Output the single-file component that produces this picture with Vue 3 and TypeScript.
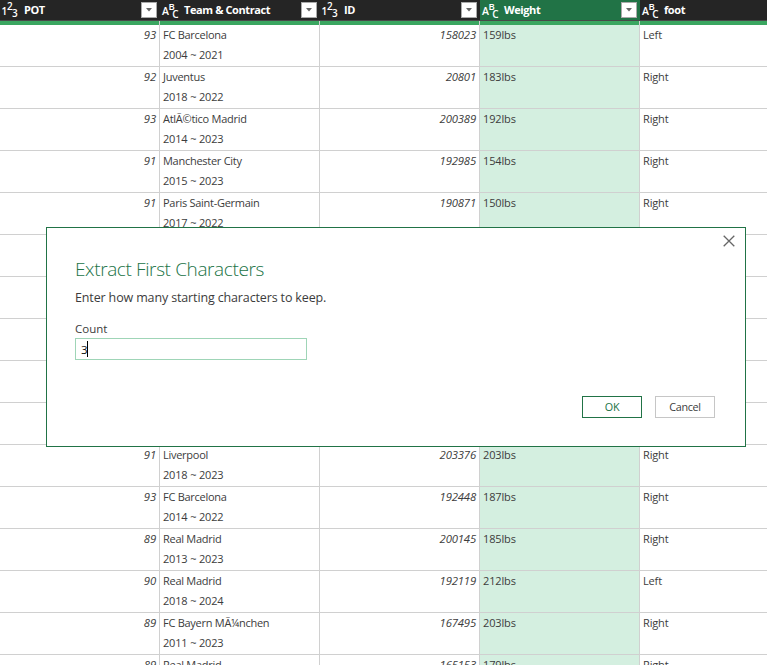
<script setup lang="ts">
import { ref } from 'vue'

interface Column {
  title: string
  kind: 'number' | 'text'
  filter: boolean
  selected?: boolean
}

interface Player {
  pot: string
  team: string
  contract: string
  id: string
  weight: string
  foot: string
}

const columns: Column[] = [
  { title: 'POT', kind: 'number', filter: true },
  { title: 'Team & Contract', kind: 'text', filter: true },
  { title: 'ID', kind: 'number', filter: true },
  { title: 'Weight', kind: 'text', filter: true, selected: true },
  { title: 'foot', kind: 'text', filter: false },
]

const player = (
  pot = '', team = '', contract = '', id = '', weight = '', foot = '',
): Player => ({ pot, team, contract, id, weight, foot })

const rows: Player[] = [
  player('93', 'FC Barcelona', '2004 ~ 2021', '158023', '159lbs', 'Left'),
  player('92', 'Juventus', '2018 ~ 2022', '20801', '183lbs', 'Right'),
  player('93', 'AtlÃ©tico Madrid', '2014 ~ 2023', '200389', '192lbs', 'Right'),
  player('91', 'Manchester City', '2015 ~ 2023', '192985', '154lbs', 'Right'),
  player('91', 'Paris Saint-Germain', '2017 ~ 2022', '190871', '150lbs', 'Right'),
  player(),
  player(),
  player(),
  player(),
  player(),
  player('91', 'Liverpool', '2018 ~ 2023', '203376', '203lbs', 'Right'),
  player('93', 'FC Barcelona', '2014 ~ 2022', '192448', '187lbs', 'Right'),
  player('89', 'Real Madrid', '2013 ~ 2023', '200145', '185lbs', 'Right'),
  player('90', 'Real Madrid', '2018 ~ 2024', '192119', '212lbs', 'Left'),
  player('89', 'FC Bayern MÃ¼nchen', '2011 ~ 2023', '167495', '203lbs', 'Right'),
  player('89', 'Real Madrid', '', '165153', '179lbs', 'Right'),
]

const count = ref('3')
</script>

<template>
  <main class="editor">
    <div class="grid header">
      <div v-for="col in columns" :key="col.title" class="head" :class="{ selected: col.selected }">
        <svg class="type" width="18" height="20" viewBox="0 0 18 20" aria-hidden="true">
          <template v-if="col.kind === 'number'">
            <text x="0.6" y="14.7" font-size="10">1</text>
            <text x="5.9" y="10.3" font-size="10">2</text>
            <text x="11" y="17" font-size="10">3</text>
          </template>
          <template v-else>
            <text x="1" y="15" font-size="10.5">A</text>
            <text x="7.5" y="9.7" font-size="9.5">B</text>
            <text x="11.2" y="17.7" font-size="10">C</text>
          </template>
        </svg>
        <span class="title">{{ col.title }}</span>
        <button v-if="col.filter" class="filter" type="button">
          <svg width="6" height="4" viewBox="0 0 6 4"><path d="M0 0H6L3 3.5Z" fill="#666" /></svg>
        </button>
      </div>
    </div>
    <div class="grid quality">
      <i v-for="col in columns" :key="col.title"></i>
    </div>
    <div v-for="(row, i) in rows" :key="i" class="grid row">
      <div class="cell num">{{ row.pot }}</div>
      <div class="cell">
        <div class="team">{{ row.team }}</div>
        <div class="years">{{ row.contract }}</div>
      </div>
      <div class="cell num">{{ row.id }}</div>
      <div class="cell selected">{{ row.weight }}</div>
      <div class="cell">{{ row.foot }}</div>
    </div>

    <section class="dialog" role="dialog">
      <button class="close" type="button">
        <svg width="12" height="12" viewBox="0 0 12 12">
          <path d="M0.7 0.7L11.3 11.3M11.3 0.7L0.7 11.3" fill="none" stroke="#666" stroke-width="1.3" />
        </svg>
      </button>
      <h1>Extract First Characters</h1>
      <p>Enter how many starting characters to keep.</p>
      <label>Count</label>
      <div class="field"><span>{{ count }}</span><i class="caret"></i></div>
      <footer>
        <button class="btn primary" type="button">OK</button>
        <button class="btn" type="button">Cancel</button>
      </footer>
    </section>
  </main>
</template>

<style>
body {
  margin: 0;
  overflow: hidden;
}
</style>

<style scoped>
* {
  box-sizing: border-box;
}

.editor {
  position: relative;
  width: 767px;
  height: 665px;
  overflow: hidden;
  background: #fff;
  color: #3c3c3c;
  font-family: "Open Sans", "Noto Sans", sans-serif;
  font-size: 11px;
}

button {
  font: inherit;
  padding: 0;
}

.grid {
  display: grid;
  grid-template-columns: repeat(4, 160px) 1fr;
}

.header {
  height: 21px;
}

.head {
  display: flex;
  align-items: flex-start;
  padding: 0 3px 0 1px;
  background: #252525;
  border-bottom: 1px solid #484848;
  color: #fff;
}

.head.selected {
  background: #217346;
}

.type {
  flex: none;
  fill: #fff;
  font-family: "Open Sans", sans-serif;
  font-weight: 600;
}

.title {
  flex: 1;
  margin-left: 5px;
  line-height: 20px;
  font-weight: 700;
  font-size: 11px;
  letter-spacing: -0.4px;
  white-space: nowrap;
}

.filter {
  display: flex;
  align-items: center;
  justify-content: center;
  width: 16px;
  height: 16px;
  margin-top: 2px;
  background: #fff;
  border: 1px solid #aaa;
}

.quality {
  height: 4px;
}

.quality i {
  background: #3aa660;
  border-right: 1px solid #d0d0d0;
}

.quality i:last-child {
  border-right: 0;
}

.row {
  height: 42px;
}

.cell {
  padding: 0 3px;
  border-right: 1px solid #d0d0d0;
  border-bottom: 1px solid #d0d0d0;
  line-height: 20px;
  letter-spacing: -0.15px;
  white-space: nowrap;
  overflow: hidden;
}

.cell:last-child {
  border-right: 0;
}

.team {
  letter-spacing: -0.27px;
}

.years {
  letter-spacing: -0.17px;
}

.cell.num {
  text-align: right;
  font-style: italic;
  font-size: 11.3px;
  letter-spacing: -0.15px;
}

.cell.selected {
  background: #d4efe0;
}

.dialog {
  position: absolute;
  left: 46px;
  top: 227px;
  width: 700px;
  height: 220px;
  padding: 27px 30px 28px 28px;
  display: flex;
  flex-direction: column;
  align-items: flex-start;
  background: #fff;
  border: 1px solid #217346;
}

.close {
  position: absolute;
  top: 7px;
  right: 10px;
  width: 12px;
  height: 12px;
  background: none;
  border: 0;
}

.close svg {
  display: block;
}

h1 {
  margin: 0;
  height: 29px;
  line-height: 29px;
  font-size: 19px;
  font-weight: 300;
  letter-spacing: -0.38px;
  color: #217346;
}

p {
  margin: 4px 0 0;
  line-height: 20px;
  font-size: 12.5px;
  letter-spacing: -0.14px;
}

label {
  margin-top: 12px;
  line-height: 18px;
  font-size: 11.5px;
}

.field {
  display: flex;
  align-items: center;
  width: 232px;
  height: 22px;
  padding-left: 5px;
  border: 1px solid #9fd5b7;
  color: #111;
  font-size: 11.5px;
}

.field span {
  letter-spacing: -0.3px;
}

.caret {
  width: 1px;
  height: 16px;
  background: #000;
}

footer {
  display: flex;
  gap: 13px;
  margin-top: auto;
  margin-left: auto;
}

.btn {
  width: 60px;
  height: 22px;
  padding-bottom: 1px;
  background: #fff;
  border: 1px solid #c6c6c6;
  color: #3c3c3c;
  font-size: 10.8px;
  letter-spacing: -0.3px;
}

.btn.primary {
  border-color: #217346;
  color: #217346;
}
</style>
